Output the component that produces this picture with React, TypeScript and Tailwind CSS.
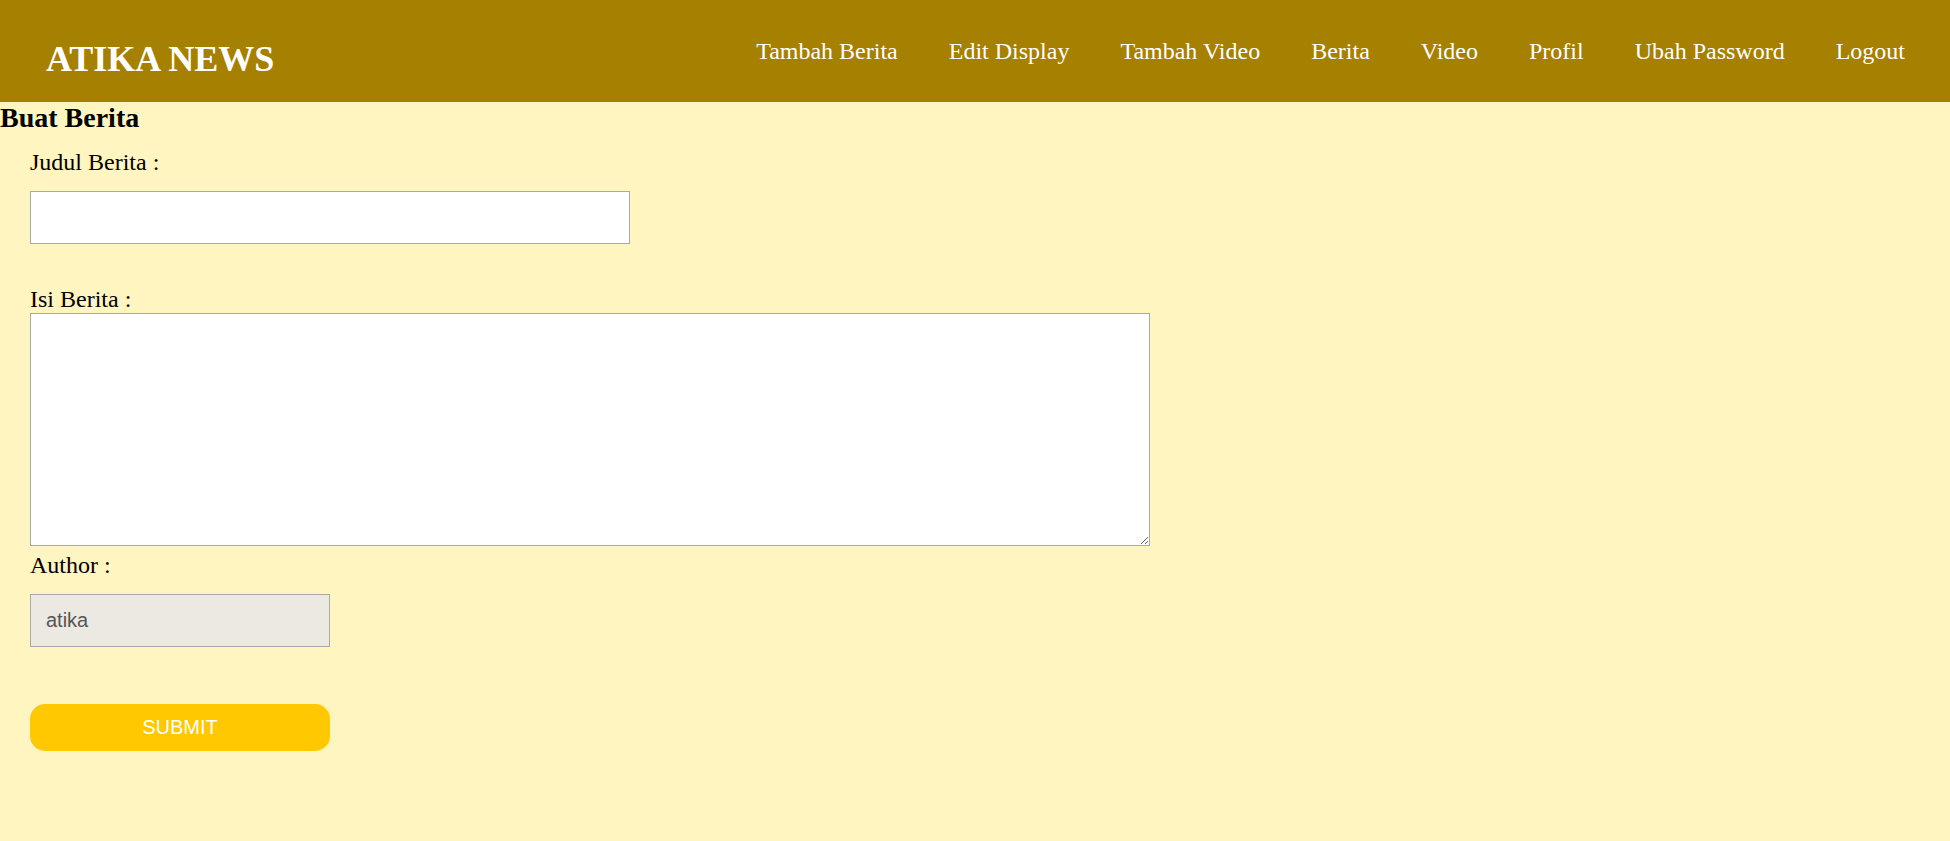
import React from 'react';

const navItems = ['Tambah Berita', 'Edit Display', 'Tambah Video', 'Berita', 'Video', 'Profil', 'Ubah Password', 'Logout'];

const App: React.FC = () => {
    return (
        <div className="min-h-[841px] bg-[#fff5c0] font-['Liberation_Serif','Times_New_Roman',serif] text-black">
            {/* Header */}
            <header className="flex h-[102px] items-start justify-between bg-[#a68000] pl-[46px] pr-[45px]">
                <h1 className="mt-[39px] text-[36px] font-bold leading-[40px] text-white">ATIKA NEWS</h1>
                <nav className="mt-[37px] flex gap-[51px]">
                    {navItems.map((item) => (
                        <a key={item} href="#" className="text-[24px] leading-[28px] text-white">
                            {item}
                        </a>
                    ))}
                </nav>
            </header>

            {/* Form */}
            <h2 className="text-[28px] font-bold leading-[32px]">Buat Berita</h2>
            <form className="flex flex-col items-start pl-[30px]" onSubmit={(e) => e.preventDefault()}>
                <label className="mt-[14px] text-[24px] leading-[28px]">Judul Berita :</label>
                <input
                    type="text"
                    className="mt-[15px] h-[53px] w-[600px] border border-[#a9a9a9] bg-white px-[15px] font-['Liberation_Sans',Arial,sans-serif] text-[20px] outline-none"
                />

                <label className="mt-[41px] text-[24px] leading-[28px]">Isi Berita :</label>
                <textarea className="block h-[233px] w-[1120px] border border-[#a9a9a9] bg-white p-[4px] font-['Liberation_Sans',Arial,sans-serif] text-[16px] outline-none" />

                <label className="mt-[5px] text-[24px] leading-[28px]">Author :</label>
                <input
                    type="text"
                    value="atika"
                    readOnly
                    className="mt-[15px] h-[53px] w-[300px] border border-[#a9a9a9] bg-[#ebe9e1] px-[15px] font-['Liberation_Sans',Arial,sans-serif] text-[20px] text-[#555555] outline-none"
                />

                <button
                    type="submit"
                    className="mt-[57px] h-[47px] w-[300px] rounded-[15px] bg-[#ffc800] pb-[2px] font-['Liberation_Sans',Arial,sans-serif] text-[20px] text-white"
                >
                    SUBMIT
                </button>
            </form>
        </div>
    );
};

export default App;
